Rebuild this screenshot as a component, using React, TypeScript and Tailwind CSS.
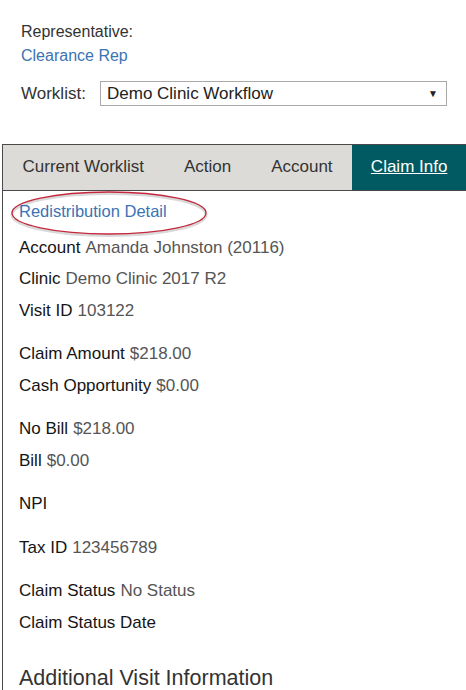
import React from 'react';

const tabs = [
  { label: 'Current Worklist', w: 'w-[161px]' },
  { label: 'Action', w: 'w-[88px]' },
  { label: 'Account', w: 'w-[101px]' },
];

const groups: { label: string; value?: string }[][] = [
  [
    { label: 'Account', value: 'Amanda Johnston (20116)' },
    { label: 'Clinic', value: 'Demo Clinic 2017 R2' },
    { label: 'Visit ID', value: '103122' },
  ],
  [
    { label: 'Claim Amount', value: '$218.00' },
    { label: 'Cash Opportunity', value: '$0.00' },
  ],
  [
    { label: 'No Bill', value: '$218.00' },
    { label: 'Bill', value: '$0.00' },
  ],
  [{ label: 'NPI' }],
  [{ label: 'Tax ID', value: '123456789' }],
  [
    { label: 'Claim Status', value: 'No Status' },
    { label: 'Claim Status Date' },
  ],
];

const App: React.FC = () => {
  return (
    <div className="w-[466px] h-[690px] overflow-hidden bg-white font-['Liberation_Sans',Arial,sans-serif]">
      {/* Header */}
      <div className="pl-[21px] pt-[20px]">
        <div className="leading-[24px] text-[16px] text-[#333]">Representative:</div>
        <div className="leading-[24px] text-[16px] text-[#3b73b3]">Clearance Rep</div>
        <div className="flex items-center mt-[13px]">
          <span className="text-[17px] text-[#333] w-[79px]">Worklist:</span>
          <div className="w-[347px] h-[25px] border border-[#a9a9a9] flex items-center justify-between pl-[6px] pr-[8px]">
            <span className="text-[17px] text-[#222] leading-none">Demo Clinic Workflow</span>
            <span className="text-[10px] text-[#222]">▼</span>
          </div>
        </div>
      </div>

      {/* Tabs + content */}
      <div className="mt-[37px] ml-[2px] border-l border-t border-[#4a4a4a]">
        <div className="flex h-[46px] bg-[#dcdbd7] border-b border-[#4a4a4a]">
          {tabs.map((t) => (
            <div key={t.label} className={`${t.w} flex items-center justify-center text-[17px] text-[#333]`}>
              {t.label}
            </div>
          ))}
          <div className="w-[114px] flex items-center justify-center text-[17px] text-white underline bg-[#015a61]">
            Claim Info
          </div>
        </div>

        <div className="relative pl-[16px] pt-[5px]">
          <svg className="absolute left-[7px] top-[0px]" width="200" height="46" viewBox="0 0 200 46">
            <ellipse cx="99" cy="22" rx="97" ry="21" fill="none" stroke="#d9d9d9" strokeWidth="3" transform="translate(0 1.5)" />
            <ellipse cx="99" cy="22" rx="97" ry="21" fill="none" stroke="#c3283c" strokeWidth="1.3" />
          </svg>
          <div className="relative h-[32px] flex items-center text-[16.5px] text-[#3b73b3]">Redistribution Detail</div>

          <div className="mt-[4px]">
            {groups.map((g, gi) => (
              <div key={gi} className={gi > 0 ? 'mt-[12px]' : ''}>
                {g.map((r) => (
                  <div key={r.label} className="h-[31.5px] flex items-center text-[17px]">
                    <span className="text-[#151515]">{r.label}</span>
                    {r.value && <span className="ml-[5px] text-[#555]">{r.value}</span>}
                  </div>
                ))}
              </div>
            ))}
          </div>

          <div className="mt-[24px] h-[32px] flex items-center text-[21.5px] text-[#333]">
            Additional Visit Information
          </div>
        </div>
      </div>
    </div>
  );
};

export default App;
